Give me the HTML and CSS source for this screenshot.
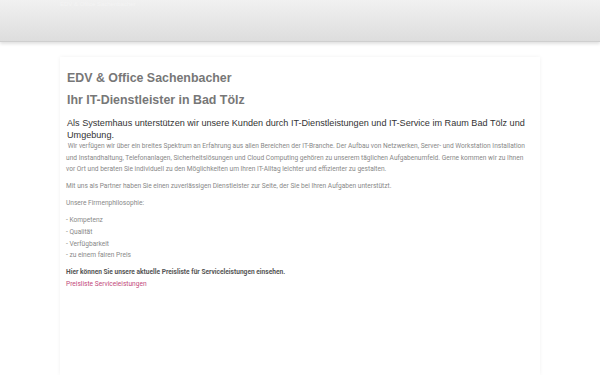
FILE: index.html
```html
<!DOCTYPE html>
<html lang="de">
<head>
    <meta charset="UTF-8">
    <meta name="viewport" content="width=device-width, initial-scale=1.0">
    <title>EDV &amp; Office Sachenbacher</title>
    <link rel="stylesheet" href="styles.css">
</head>
<body>

<!-- Top bar -->
<div class="topbar">
    <div class="topbar-inner">
        <span class="topbar-text">EDV &amp; Office Sachenbacher</span>
    </div>
</div>

<div class="container">
    <h1>EDV &amp; Office Sachenbacher</h1>
    <h2>Ihr IT-Dienstleister in Bad Tölz</h2>

    <p class="lead">Als Systemhaus unterstützen wir unsere Kunden durch IT-Dienstleistungen und IT-Service im Raum Bad Tölz und Umgebung.</p>

    <p class="text">&nbsp;Wir verfügen wir über ein breites Spektrum an Erfahrung aus allen Bereichen der IT-Branche. Der Aufbau von Netzwerken, Server- und Workstation Installation und Instandhaltung, Telefonanlagen, Sicherheitslösungen und Cloud Computing gehören zu unserem täglichen Aufgabenumfeld. Gerne kommen wir zu Ihnen vor Ort und beraten Sie individuell zu den Möglichkeiten um Ihren IT-Alltag leichter und effizienter zu gestalten.</p>

    <p class="text">Mit uns als Partner haben Sie einen zuverlässigen Dienstleister zur Seite, der Sie bei Ihren Aufgaben unterstützt.</p>

    <p class="text">Unsere Firmenphilosophie:</p>

    <p class="text">
        - Kompetenz<br>
        - Qualität<br>
        - Verfügbarkeit<br>
        - zu einem fairen Preis
    </p>

    <p class="text"><strong>Hier können Sie unsere aktuelle Preisliste für Serviceleistungen einsehen.</strong><br>
        <a href="#">Preisliste Serviceleistungen</a></p>
</div>

</body>
</html>
```

FILE: styles.css
```css
body {
    font-family: 'Liberation Sans', Arial, sans-serif;
    background-color: #ffffff;
    margin: 0;
    min-height: 375px;
}

/* Grey bar across the top */
.topbar {
    height: 41px;
    background: linear-gradient(to bottom, #f1f1f1, #dddddd);
    border-bottom: 1px solid #cfcfcf;
    box-shadow: 0 2px 3px rgba(0, 0, 0, 0.12);
}

.topbar-inner {
    width: 480px;
    margin: 0 auto;
}

.topbar-text {
    display: block;
    padding-top: 1px;
    font-size: 6px;
    color: #f4f4f4;
}

.container {
    width: 468px;
    margin: 15px auto 0;
    padding: 8px 6px 60px;
    min-height: 250px;
    background-color: #ffffff;
    box-shadow: 0 0 4px rgba(0, 0, 0, 0.06);
}

h1 {
    color: #777;
    font-size: 12.4px;
    font-weight: 700;
    margin: 6px 0 8px;
    padding-left: 1px;
}

h2 {
    color: #777;
    font-size: 12.4px;
    font-weight: 700;
    margin: 0 0 10px;
    padding-left: 1px;
}

.lead {
    font-size: 9.1px;
    line-height: 12px;
    color: #333;
    margin: 0;
    padding-left: 1px;
}

.text {
    font-family: Roboto, 'Liberation Sans', sans-serif;
    font-size: 6.6px;
    line-height: 11.6px;
    color: #888;
    margin: 0 0 5.5px;
}

.text strong {
    color: #555;
}

a {
    color: #c2497a;
    text-decoration: none;
}

a:hover {
    color: #9a2f5b;
}
```
